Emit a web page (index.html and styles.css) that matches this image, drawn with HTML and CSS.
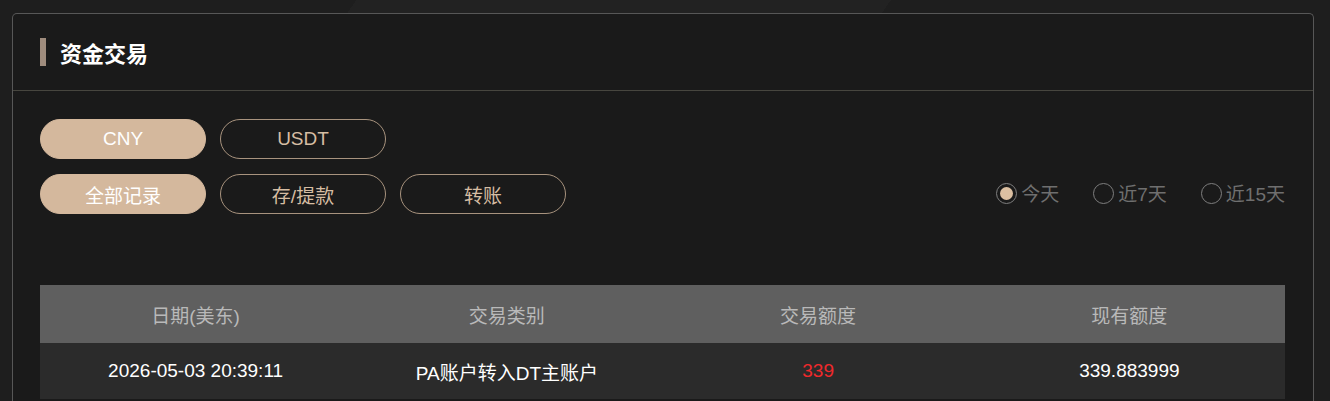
FILE: index.html
```html
<!DOCTYPE html>
<html>
<head>
    <meta charset="utf-8">
    <title>资金交易</title>
    <link rel="stylesheet" href="styles.css">
</head>
<body>
    <div class="panel">
        <div class="panel-head">
            <span class="bar"></span>
            <h1>资金交易</h1>
        </div>

        <div class="panel-body">
            <div class="btn-row">
                <button class="pill active">CNY</button>
                <button class="pill">USDT</button>
            </div>

            <div class="btn-row filters">
                <button class="pill active">全部记录</button>
                <button class="pill">存/提款</button>
                <button class="pill">转账</button>

                <div class="radios">
                    <label class="radio checked"><span class="dot"></span>今天</label>
                    <label class="radio"><span class="dot"></span>近7天</label>
                    <label class="radio"><span class="dot"></span>近15天</label>
                </div>
            </div>

            <table>
                <thead>
                    <tr>
                        <th>日期(美东)</th>
                        <th>交易类别</th>
                        <th>交易额度</th>
                        <th>现有额度</th>
                    </tr>
                </thead>
                <tbody>
                    <tr>
                        <td>2026-05-03 20:39:11</td>
                        <td>PA账户转入DT主账户</td>
                        <td class="minus">339</td>
                        <td>339.883999</td>
                    </tr>
                </tbody>
            </table>
        </div>
    </div>
</body>
</html>
```

FILE: styles.css
```css
body {
    margin: 0;
    padding: 13px 16px 0 12px;
    font-family: "Liberation Sans", "Noto Sans CJK SC", sans-serif;
    background: linear-gradient(125deg, #1e1e1e 0%, #1e1e1e 22%, #222 22%, #222 55%, #1e1e1e 55%);
    color: #fff;
}

.panel {
    border: 1px solid #575757;
    border-bottom: none;
    border-radius: 5px 5px 0 0;
    background-color: rgba(26, 26, 26, 0.92);
    height: 400px;
}

.panel-head {
    display: flex;
    align-items: center;
    height: 76px;
    padding-left: 27px;
    border-bottom: 1px solid #47463f;
}

.bar {
    width: 6px;
    height: 28px;
    background-color: #9f8c7d;
    margin-right: 14px;
}

h1 {
    margin: 0;
    font-size: 22px;
    font-weight: bold;
    color: #fff;
}

.panel-body {
    padding: 28px 28px 0 27px;
}

.btn-row {
    display: flex;
    align-items: center;
    gap: 14px;
    margin-bottom: 15px;
}

.pill {
    width: 166px;
    height: 40px;
    border-radius: 20px;
    border: 1px solid #a8937e;
    background: transparent;
    color: #d6bda3;
    font-family: inherit;
    font-size: 19px;
    padding: 0;
    cursor: pointer;
}

.pill.active {
    background-color: #d4b89d;
    border-color: #d4b89d;
    color: #fff;
}

.radios {
    margin-left: auto;
    display: flex;
    align-items: center;
    gap: 34px;
}

.radio {
    display: flex;
    align-items: center;
    gap: 4px;
    font-size: 19px;
    color: #6f6f6f;
    margin-top: -3px;
}

.dot {
    width: 19px;
    height: 19px;
    border: 1.5px solid #7e7e7e;
    border-radius: 50%;
    box-sizing: content-box;
    position: relative;
    margin-top: 2px;
}

.radio.checked .dot::after {
    content: "";
    position: absolute;
    left: 3px;
    top: 3px;
    width: 13px;
    height: 13px;
    border-radius: 50%;
    background-color: #dcc0a2;
}

table {
    width: 100%;
    margin-top: 71px;
    border-collapse: collapse;
    table-layout: fixed;
}

th, td {
    text-align: center;
    font-weight: normal;
    padding: 0;
}

th {
    height: 58px;
    background-color: #5f5f5f;
    color: #b9b9b9;
    font-size: 19px;
}

td {
    height: 56px;
    background-color: #2b2b2b;
    color: #fff;
    font-size: 19px;
}

td.minus {
    color: #f0292b;
}
```
